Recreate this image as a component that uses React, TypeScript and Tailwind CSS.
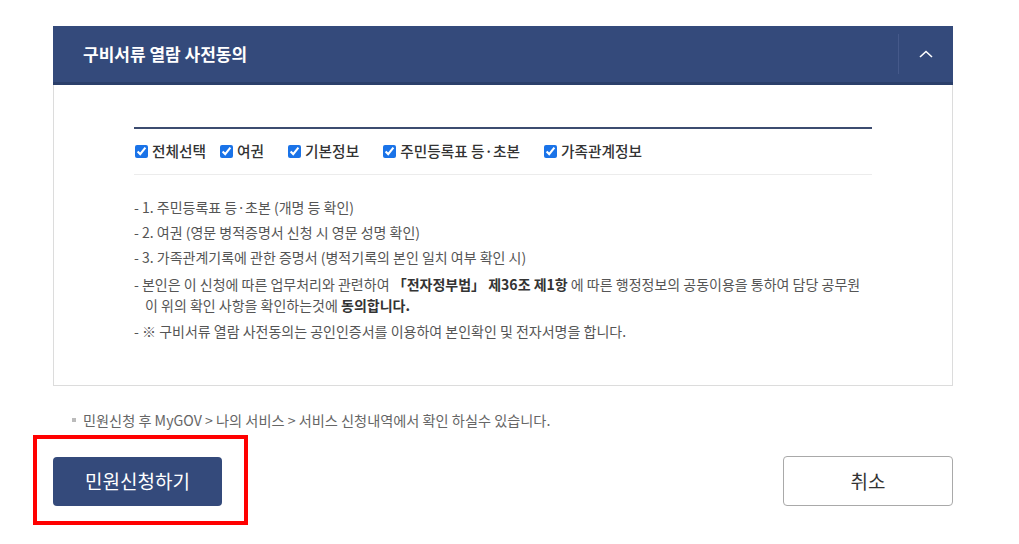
import React from 'react';

const font = { fontFamily: '"Noto Sans CJK KR", "Noto Sans", sans-serif' };

const options = ['전체선택', '여권', '기본정보', '주민등록표 등·초본', '가족관계정보'];

const ConsentPanel: React.FC = () => (
  <div>
    {/* Header */}
    <div className="flex h-[59px] items-stretch bg-[#344a7b] border-b-[3px] border-[#2b3f6a]">
      <h2 className="flex flex-1 items-center pl-[30px] text-[17px] font-bold text-white">
        구비서류 열람 사전동의
      </h2>
      <div className="my-[8px] w-px bg-[#45598a]" />
      <button className="flex w-[54px] items-center justify-center">
        <svg width="14" height="8" viewBox="0 0 14 8" fill="none">
          <polyline points="1,7 7,1.5 13,7" stroke="#fff" strokeWidth="1.6" />
        </svg>
      </button>
    </div>

    {/* Body */}
    <div className="border border-t-0 border-[#dcdcdc] px-[80px] pt-[42px] pb-[43px]">
      <div className="border-t-2 border-[#3c4c70]">
        <div className="flex h-[46px] items-center border-b border-[#ececec] pl-px">
          {options.map((label, i) => (
            <label
              key={label}
              className={`flex items-center text-[14.7px] font-medium text-[#333] ${i === 0 ? 'mr-[14px]' : 'mr-[24px]'}`}
            >
              <input type="checkbox" defaultChecked className="m-0 mr-[4px] h-[13px] w-[13px] accent-[#1a73e8]" />
              {label}
            </label>
          ))}
        </div>

        <ul className="mt-[22px] text-[14px] leading-[21px] text-[#555]">
          <li className="mb-[4px]">- 1. 주민등록표 등·초본 (개명 등 확인)</li>
          <li className="mb-[4px]">- 2. 여권 (영문 병적증명서 신청 시 영문 성명 확인)</li>
          <li className="mb-[6px]">- 3. 가족관계기록에 관한 증명서 (병적기록의 본인 일치 여부 확인 시)</li>
          <li className="mb-[5px] pl-[11px] -indent-[11px]">
            - 본인은 이 신청에 따른 업무처리와 관련하여 <b className="text-[#333]">「전자정부법」 제36조 제1항</b> 에 따른 행정정보의 공동이용을 통하여 담당 공무원
            <br />
            이 위의 확인 사항을 확인하는것에 <b className="text-[#333]">동의합니다.</b>
          </li>
          <li>- ※ 구비서류 열람 사전동의는 공인인증서를 이용하여 본인확인 및 전자서명을 합니다.</li>
        </ul>
      </div>
    </div>
  </div>
);

const App: React.FC = () => {
  return (
    <div className="min-h-[544px] bg-white" style={font}>
      <div className="ml-[53px] w-[900px] pt-[26px]">
        <ConsentPanel />

        <p className="mt-[24px] flex items-center pl-[19px] text-[14.2px] leading-[20px] text-[#666]">
          <span className="mr-[7px] inline-block h-[4px] w-[4px] bg-[#bbb]" />
          민원신청 후 MyGOV &gt; 나의 서비스 &gt; 서비스 신청내역에서 확인 하실수 있습니다.
        </p>

        <div className="mt-[26px] flex items-start justify-between">
          <div className="relative mt-px">
            <button className="h-[49px] w-[169px] rounded-[4px] bg-[#344a7b] text-[19px] text-white">
              민원신청하기
            </button>
            {/* red annotation box */}
            <div className="pointer-events-none absolute -left-[20px] -top-[22px] h-[90px] w-[215px] border-4 border-[#f00]" />
          </div>
          <button className="h-[50px] w-[170px] rounded-[4px] border border-[#a9a9a9] bg-white text-[19px] text-[#333]">
            취소
          </button>
        </div>
      </div>
    </div>
  );
};

export default App;
